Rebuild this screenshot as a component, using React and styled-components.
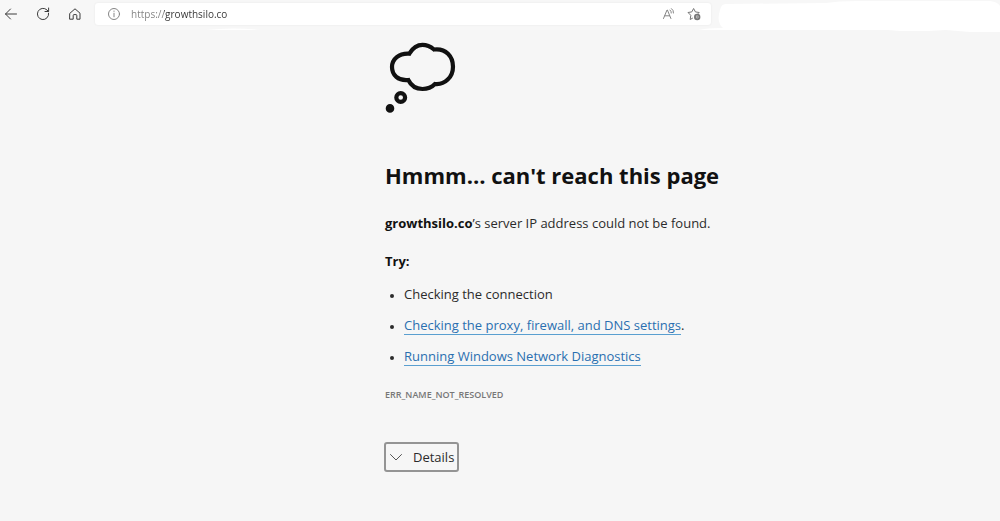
import { useState } from "react";
import styled, { createGlobalStyle } from "styled-components";

const tips = [
    { text: "Checking the connection" },
    { text: "Checking the proxy, firewall, and DNS settings", link: true, end: "." },
    { text: "Running Windows Network Diagnostics", link: true },
]

const BackIcon = () => (
    <Icon viewBox="0 0 16 16" width="16" height="16">
        <path d="M13.500 8H2.500M7.500 3L2.500 8l5 5" />
    </Icon>
)

const RefreshIcon = () => (
    <Icon viewBox="0 0 16 16" width="16" height="16">
        <path d="M13.6 7.2A5.6 5.6 0 1 1 12 4L13.4 5.4M13.6 2v3.5H10" />
    </Icon>
)

const HomeIcon = () => (
    <Icon viewBox="0 0 16 16" width="16" height="16">
        <path d="M3 7.2L8 2.8l5 4.4v6H9.8V9.4a.8.8 0 0 0-.8-.8H7a.8.8 0 0 0-.8.8v3.8H3z" />
    </Icon>
)

const InfoIcon = () => (
    <Icon viewBox="0 0 16 16" width="16" height="16" $tone="#858585">
        <circle cx="8" cy="8" r="5.5" />
        <path d="M8 7.2v3.6M8 5v.4" />
    </Icon>
)

const ReadAloudIcon = () => (
    <Icon viewBox="0 0 16 16" width="16" height="16" $tone="#858585">
        <path d="M2.5 12.5L6 4h.4l3.5 8.5M3.8 9.8h4.8M9 4q1.4 1 1.3 3M10.5 2.6q2.3 1.6 2 4.400" />
    </Icon>
)

const FavoriteIcon = () => (
    <Icon viewBox="0 0 16 16" width="16" height="16" $tone="#777777">
        <path d="M6.500 12.2L4.2 13.5l.6-4.2L2 6.5l3.8-.6L7.600 2.500l1.8 3.4 3.8.6-1 1" />
        <circle cx="11.2" cy="11" r="2.3" strokeWidth="1.800" />
        <path d="M11.2 9.8v2.4M10 11h2.4" strokeWidth=".8" />
    </Icon>
)

const CloudIcon = () => (
    <CloudSvg viewBox="0 0 72 72" width="72" height="72">
        <path d="M24.3 11.7C28 5.5 32 2.900 37.500 2.900 42 2.900 46 5 49 7.500 61 6 68 14.500 68 24.700 68 35 60 43 50 42 47 45 42 47 37.500 47 31 47 26 43.500 23.300 38 13 39 7 33 7 25 7 17 14 11 24.300 11.700z" />
        <circle cx="15.700" cy="55.500" r="4.400" />
        <circle cx="5" cy="66.400" r="2.200" />
    </CloudSvg>
)

export default function App() {
    const [address, setAddress] = useState("https://growthsilo.co")
    const [open, setOpen] = useState(false)

    return (
        <>
            <GlobalStyle />
            <ToolbarHeader>
                <NavButtons>
                    <IconButton aria-label="Back"><BackIcon /></IconButton>
                    <IconButton aria-label="Refresh"><RefreshIcon /></IconButton>
                    <IconButton aria-label="Home"><HomeIcon /></IconButton>
                </NavButtons>
                <AddressBar>
                    <IconButton aria-label="Site information"><InfoIcon /></IconButton>
                    <AddressInput
                        aria-label="Address"
                        spellCheck={false}
                        value={address}
                        onChange={(e) => setAddress(e.target.value)}
                    />
                    <IconButton aria-label="Read aloud"><ReadAloudIcon /></IconButton>
                    <IconButton aria-label="Add to favorites"><FavoriteIcon /></IconButton>
                </AddressBar>
                <BlankSvg viewBox="0 0 282 30" preserveAspectRatio="none" aria-hidden="true">
                    <path d="M2 10Q3 4 8 4L108 3Q120 1 140 1H272Q280 2 282 6V32H252L228 30 210 31H182L170 30H-20Q-10 28 5 28-2 22 2 10z" />
                    <path d="M-512 30q27-3 54 0z" />
                </BlankSvg>
            </ToolbarHeader>
            <ErrorMain>
                <CloudIcon />
                <TitleH1>Hmmm… can't reach this page</TitleH1>
                <MessageP><b>growthsilo.co</b>’s server IP address could not be found.</MessageP>
                <TryH2>Try:</TryH2>
                <TipList>
                    {tips.map(({ text, link, end }) => (
                        <TipItem key={text}>
                            {link ? <TipLink href="#">{text}</TipLink> : text}{end}
                        </TipItem>
                    ))}
                </TipList>
                <ErrorCodeP>ERR_NAME_NOT_RESOLVED</ErrorCodeP>
                <DetailsButton aria-expanded={open} onClick={() => setOpen(!open)}>
                    <Icon viewBox="0 0 14 14" width="14" height="14" $tone="#555555">
                        <path d="M1.500 4.500L7 10l5.500-5.500" />
                    </Icon>
                    Details
                </DetailsButton>
            </ErrorMain>
        </>
    )
}

const GlobalStyle = createGlobalStyle`
* { box-sizing: border-box; }
body {
    margin: 0;
    background: #f6f6f6;
    color: #2b2b2b;
    font-family: "Open Sans", "Noto Sans", sans-serif;
    font-size: 13px;
}
button, input { font: inherit; color: inherit; }
`

const Icon = styled.svg`
flex: none;
fill: none;
stroke: ${({ $tone }) => $tone || "#3c3c3c"};
stroke-linecap: round;
stroke-linejoin: round;
`

const CloudSvg = styled.svg`
display: block;
fill: none;
stroke: #111111;
stroke-width: 4.2;
`

const ToolbarHeader = styled.header`
display: flex;
align-items: center;
height: 30px;
background: #f7f7f7;
`

const NavButtons = styled.nav`
display: flex;
gap: 16px;
padding: 0 12px 3px 3px;
`

const IconButton = styled.button`
display: grid;
place-items: center;
flex: none;
padding: 0;
border: 0;
background: none;
`

const AddressBar = styled.div`
display: flex;
align-items: center;
flex: 596;
gap: 9px;
height: 22px;
margin-bottom: 3px;
padding: 0 9px 0 11px;
border-radius: 3px;
background: #ffffff;
box-shadow: 0 0 2px #e4e4e4;
`

/* the scheme is paler than the host */
const AddressInput = styled.input`
flex: 1;
min-width: 0;
padding: 0;
border: 0;
outline: none;
font-size: 10px;
background: linear-gradient(90deg, #808080 33px, #333333 33px);
background-clip: text;
-webkit-text-fill-color: transparent;
`

const BlankSvg = styled.svg`
flex: 282;
min-width: 0;
height: 30px;
margin-left: 7px;
overflow: visible;
fill: #ffffff;
`

const ErrorMain = styled.main`
padding: 12px 20px 40px 38.5%;
`

const TitleH1 = styled.h1`
margin: 44px 0 0;
font-size: 22px;
line-height: 34px;
color: #111111;
`

const MessageP = styled.p`
margin: 21px 0 0;
line-height: 20px;

b { color: #111111; }
`

const TryH2 = styled.h2`
margin: 18px 0 0;
font-size: 13px;
line-height: 20px;
color: #111111;
`

const TipList = styled.ul`
display: grid;
gap: 11px;
margin: 13px 0 0;
padding: 0 0 0 19px;
`

const TipItem = styled.li`
line-height: 20px;

&::marker { font-size: 10px; }
`

const TipLink = styled.a`
color: #2a6fb0;
text-decoration: none;
border-bottom: 1px solid #5a9fd0;
`

const ErrorCodeP = styled.p`
margin: 21px 0 0;
font-size: 9px;
font-weight: 600;
line-height: 16px;
color: #777777;
`

const DetailsButton = styled.button`
display: flex;
align-items: center;
gap: 10px;
height: 30px;
margin: 39px 0 0 -1px;
padding: 0 3px;
border: 2px solid #949494;
border-radius: 3px;
background: none;
`
